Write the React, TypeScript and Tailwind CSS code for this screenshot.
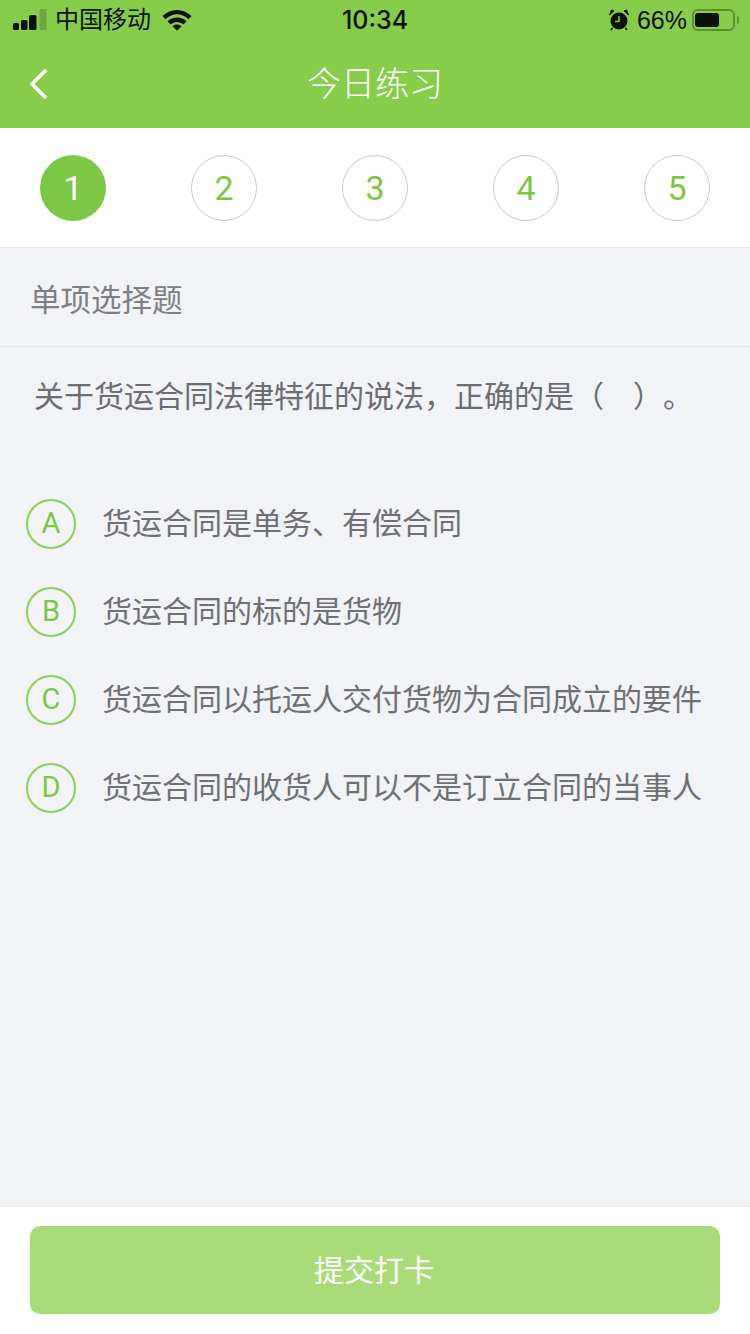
const font = { fontFamily: '"Liberation Sans", "Noto Sans CJK SC", sans-serif' }
const digit = { fontFamily: 'Roboto, "Liberation Sans", sans-serif' }

const steps = [1, 2, 3, 4, 5]
const options = [
  { key: 'A', text: '货运合同是单务、有偿合同' },
  { key: 'B', text: '货运合同的标的是货物' },
  { key: 'C', text: '货运合同以托运人交付货物为合同成立的要件' },
  { key: 'D', text: '货运合同的收货人可以不是订立合同的当事人' },
]

function StatusBar() {
  return (
    <div className="relative flex h-[40px] items-center justify-between text-[#0b1204]">
      <div className="flex items-center">
        <svg width="34" height="22" viewBox="0 0 34 22" className="ml-[13px]">
          <rect x="0" y="14" width="6" height="7" rx="1.5" fill="#0b1204" />
          <rect x="8" y="11" width="6.500" height="10" rx="1.5" fill="#0b1204" />
          <rect x="16" y="6" width="7.500" height="15" rx="1.5" fill="#0b1204" />
          <rect x="26.500" y="0" width="7" height="21" rx="1.5" fill="#6da63c" />
        </svg>
        <span className="ml-[8px] text-[24px] leading-none">中国移动</span>
        <svg width="30" height="22" viewBox="0 0 30 22" className="ml-[11px]">
          <path d="M0.500 7C9 -1 21 -1 29.500 7l-3 3.200C19.500 3.500 10.500 3.500 3.500 10.200z" fill="#0b1204" />
          <path d="M5.500 12.300c5.500-5 13.500-5 19 0l-3 3.200c-3.900-3.500-9.100-3.500-13 0z" fill="#0b1204" />
          <path d="M10.500 17.300c2.800-2.300 6.200-2.300 9 0L15 21.800z" fill="#0b1204" />
        </svg>
      </div>
      <span className="absolute left-0 right-0 top-[6px] text-center text-[25px] font-medium leading-[28px]" style={{ fontFamily: 'Inter, sans-serif' }}>10:34</span>
      <div className="flex items-center">
        <svg width="22" height="22" viewBox="0 0 22 22">
          <circle cx="11" cy="12" r="8.500" fill="#0b1204" />
          <path d="M11 7v5.500H7" stroke="#88cc4c" strokeWidth="1.500" fill="none" />
          <path d="M1.500 6 6 1.800 3.500 1zM20.500 6 16 1.800 18.500 1z" fill="#0b1204" stroke="#0b1204" />
          <path d="M4.500 19 3 21M17.500 19l1.500 2" stroke="#0b1204" strokeWidth="1.500" />
        </svg>
        <span className="ml-[7px] text-[25px] leading-none">66%</span>
        <div className="ml-[5px] flex h-[22px] w-[43px] items-center rounded-[6px] border-2 border-[#5d8f34] p-[1px]">
          <div className="h-[14px] w-[24px] rounded-[3px] bg-[#0b1204]" />
        </div>
        <div className="ml-[2px] mr-[11px] h-[8px] w-[2px] rounded-r-full bg-[#5d8f34]" />
      </div>
    </div>
  )
}

export default function App() {
  return (
    <div className="flex h-[1334px] w-[750px] flex-col overflow-hidden bg-[#f2f3f6]" style={font}>
      <header className="h-[128px] bg-[#88cc4c]">
        <StatusBar />
        <div className="relative flex h-[88px] items-center justify-center">
          <svg width="22" height="34" viewBox="0 0 22 34" className="absolute left-[28px] top-[27px]">
            <path d="M18 3 4 17l14 14" stroke="#fff" strokeWidth="3.500" fill="none" />
          </svg>
          <h1 className="text-[34px] font-light leading-none text-white">今日练习</h1>
        </div>
      </header>

      <div className="flex h-[120px] items-start justify-between border-b border-[#e4e6e8] bg-white px-[40px] pt-[27px]">
        {steps.map(n => (
          n === 1 ? (
            <div key={n} className="flex h-[66px] w-[66px] items-center justify-center rounded-full bg-[#7dc747] text-[34px] text-white" style={digit}>{n}</div>
          ) : (
            <div key={n} className="flex h-[66px] w-[66px] items-center justify-center rounded-full border border-[#c9c9c9] text-[34px] text-[#7dc747]" style={digit}>{n}</div>
          )
        ))}
      </div>

      <div className="flex h-[99px] items-center border-b border-[#e3e5e8] pl-[30px] pt-[8px] text-[30.5px] text-[#7d7f82]">单项选择题</div>

      <p className="mt-[28px] pl-[34px] text-[30px] leading-[44px] text-[#6b6d70] [text-spacing-trim:space-all]">关于货运合同法律特征的说法，正确的是（<span className="inline-block w-[29px]" />）。</p>

      <div className="mt-[80px] flex flex-col gap-[38px] pl-[26px]">
        {options.map(o => (
          <div key={o.key} className="flex items-center">
            <div className="flex h-[50px] w-[50px] shrink-0 items-center justify-center rounded-full border-2 border-[#8dd056] text-[29px] text-[#7dc747]" style={digit}>{o.key}</div>
            <span className="ml-[26px] text-[30px] leading-none text-[#6e7073]">{o.text}</span>
          </div>
        ))}
      </div>

      <footer className="mt-auto h-[128px] border-t border-[#e8eaee] bg-white px-[30px] pt-[19px]">
        <button className="flex h-[88px] w-full items-center justify-center rounded-[10px] bg-[#a9dc78] pr-[2px] text-[30px] text-white">提交打卡</button>
      </footer>
    </div>
  )
}
